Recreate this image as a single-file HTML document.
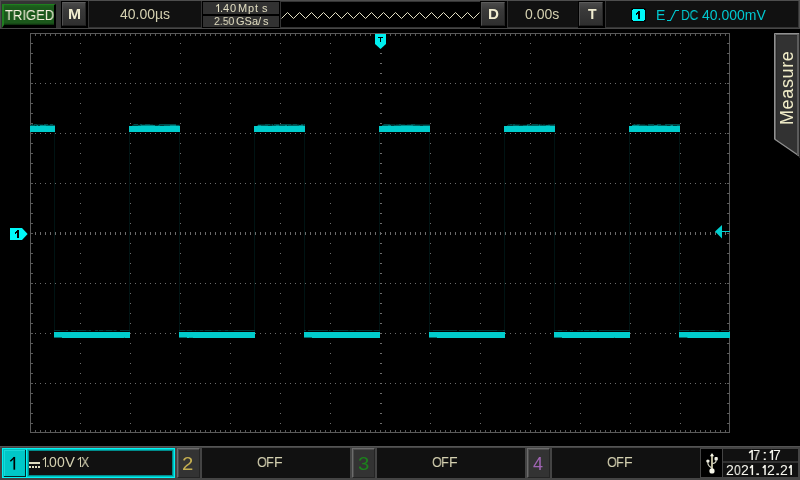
<!DOCTYPE html>
<html><head><meta charset="utf-8"><title>scope</title>
<style>
html,body{margin:0;padding:0;background:#000;}
body{width:800px;height:480px;position:relative;overflow:hidden;font-family:"Liberation Sans",sans-serif;}
.a{position:absolute;}
.t{will-change:transform;position:absolute;white-space:nowrap;line-height:1;transform-origin:0 0;}
.pn{position:absolute;background:#111;}
.btn{position:absolute;background:#000;}
.btn i{position:absolute;left:1px;top:1px;right:2px;bottom:2px;background:linear-gradient(#4a4a4a,#3a3a3a 30%,#2e2e2e);border-top:1px solid #5c5c5c;border-left:1px solid #505050;border-right:1px solid #262626;border-bottom:1px solid #1c1c1c;box-sizing:border-box;}
.cb{position:absolute;box-sizing:border-box;background:#333;border-top:1px solid #6c6c6c;border-left:1px solid #6c6c6c;border-right:1px solid #242424;border-bottom:1px solid #242424;box-shadow:inset 1px 1px 0 #4c4c4c;}
</style></head><body>

<div class="a" style="left:0;top:0;width:800px;height:29px;background:#343434"></div>
<div class="a" style="left:0;top:0;width:800px;height:1px;background:#4e4e4e"></div>
<div class="a" style="left:0;top:0;width:1px;height:29px;background:#4e4e4e"></div>
<div class="a" style="left:799px;top:0;width:1px;height:29px;background:#4e4e4e"></div>
<div class="a" style="left:0;top:28px;width:800px;height:1px;background:#484848"></div>
<div class="a" style="left:2px;top:4px;width:54px;height:24px;box-sizing:border-box;background:linear-gradient(#1d661d,#1b581b 3px,#1b581b 18px,#0c280c 20px);border-left:2px solid #1f7f1f;border-top:1px solid #1f7f1f;border-right:2px solid #000;border-bottom:3px solid #000"></div>
<div class="t" id="triged" style="left:4.6px;top:8px;font-size:14px;color:#f4f0dc;transform:scaleX(0.93)">TRIGED</div>
<div class="btn" style="left:61px;top:1px;width:27px;height:27px"><i></i></div>
<div class="t" id="M" style="left:67.8px;top:7px;font-size:14px;font-weight:bold;color:#f0ecd0;transform:scaleX(1.12)">M</div>
<div class="pn" style="left:89px;top:1px;width:112px;height:26px"></div>
<div class="t" id="tb" style="left:120px;top:7px;font-size:14px;color:#d4d0b0">40.00µs</div>
<div class="a" style="left:202px;top:1px;width:78px;height:27px;background:#000"></div>
<div class="a" style="left:203px;top:2px;width:76px;height:12px;background:#323232"></div>
<div class="a" style="left:203px;top:16px;width:76px;height:11px;background:#323232"></div>
<svg class="a" style="left:0;top:0" width="800" height="480"><path d="M218.50,4 V12 M218.60,4.35 L216.20,6.32" stroke="#e0dcc0" stroke-width="1.1" fill="none"/></svg><div class="t" style="left:220.24px;top:2.69px;font-size:11px;color:#e0dcc0;transform:scaleX(0.955);">.</div><div class="t" style="left:223.14px;top:2.69px;font-size:11px;color:#e0dcc0;transform:scaleX(1.010);">4</div><div class="t" style="left:229.97px;top:2.69px;font-size:11px;color:#e0dcc0;transform:scaleX(1.008);">0</div>
<div class="t" id="m1b" style="left:238px;top:3px;font-size:11px;color:#e0dcc0;letter-spacing:0.8px">Mpt</div>
<div class="t" id="m1c" style="left:262px;top:3px;font-size:11px;color:#e0dcc0">s</div>
<div class="t" id="m2a" style="left:213.5px;top:16px;font-size:11px;color:#e0dcc0;transform:scaleX(0.95)">2.50</div>
<div class="t" id="m2b" style="left:235.5px;top:16px;font-size:11px;color:#e0dcc0">GSa/</div>
<div class="t" id="m2c" style="left:263.3px;top:16px;font-size:11px;color:#e0dcc0">s</div>
<div class="a" style="left:281px;top:2px;width:199px;height:25px;background:#000"></div>
<svg class="a" style="left:0;top:0" width="800" height="29"><polyline points="281.5,18.5 287.5,12.5 293.5,18.5 299.5,12.5 305.5,18.5 311.5,12.5 317.5,18.5 323.5,12.5 329.5,18.5 335.5,12.5 341.5,18.5 347.5,12.5 353.5,18.5 359.5,12.5 365.5,18.5 371.5,12.5 377.5,18.5 383.5,12.5 389.5,18.5 395.5,12.5 401.5,18.5 407.5,12.5 413.5,18.5 419.5,12.5 425.5,18.5 431.5,12.5 437.5,18.5 443.5,12.5 449.5,18.5 455.5,12.5 461.5,18.5 467.5,12.5 473.5,18.5 479.5,12.5" fill="none" stroke="#e4e0c4" stroke-width="1"/></svg>
<div class="btn" style="left:480px;top:1px;width:27px;height:27px"><i></i></div>
<div class="t" id="D" style="left:487.9px;top:7px;font-size:14px;font-weight:bold;color:#f0ecd0;transform:scaleX(1.08)">D</div>
<div class="pn" style="left:508px;top:1px;width:70px;height:26px"></div>
<div class="t" id="dl" style="left:525px;top:7px;font-size:14px;color:#d4d0b0">0.00s</div>
<div class="btn" style="left:578px;top:1px;width:27px;height:27px"><i></i></div>
<div class="t" id="T" style="left:588px;top:7px;font-size:14px;font-weight:bold;color:#f0ecd0">T</div>
<div class="pn" style="left:606px;top:1px;width:192px;height:26px"></div>
<div class="a" style="left:631px;top:8px;width:15px;height:14px;background:#000;border-radius:2px"></div>
<svg class="a" style="left:631px;top:8px" width="15" height="14" shape-rendering="crispEdges"><path d="M2,1 H13 V2 H14 V12 H13 V13 H2 V12 H1 V2 H2 Z" fill="#00f8f8"/><path d="M7,3 H9 V11 H7 V6 H6 V7 H5 V5 H6 V4 H7 Z" fill="#000"/></svg>
<div class="t" id="E" style="left:656px;top:8px;font-size:14px;color:#00c8d0">E</div>
<svg class="a" style="left:660px;top:5px" width="30" height="20"><polyline points="7,15.5 10.5,15.5 15.5,5.5 19,5.5" fill="none" stroke="#00c8d0" stroke-width="1.2"/></svg>
<div class="t" id="DC" style="left:680.5px;top:8px;font-size:14px;color:#00c8d0;transform:scaleX(0.86)">DC</div>
<div class="t" id="mv" style="left:702px;top:8px;font-size:14px;color:#00c8d0">40.000mV</div>
<svg class="a" style="left:0;top:0" width="800" height="480" shape-rendering="crispEdges">
<rect x="54" y="132" width="1" height="200" fill="#001313"/>
<rect x="129" y="132" width="1" height="200" fill="#001313"/>
<rect x="179" y="132" width="1" height="200" fill="#001313"/>
<rect x="254" y="132" width="1" height="200" fill="#001313"/>
<rect x="304" y="132" width="1" height="200" fill="#001313"/>
<rect x="379" y="132" width="1" height="200" fill="#001313"/>
<rect x="429" y="132" width="1" height="200" fill="#001313"/>
<rect x="504" y="132" width="1" height="200" fill="#001313"/>
<rect x="554" y="132" width="1" height="200" fill="#001313"/>
<rect x="629" y="132" width="1" height="200" fill="#001313"/>
<rect x="679" y="132" width="1" height="200" fill="#001313"/>
<rect x="30.5" y="33.5" width="699" height="399" fill="none" stroke="#5a5a5a" stroke-width="1"/>
<line x1="35" y1="35" x2="726" y2="35" stroke="#5a5a5a" stroke-width="2" stroke-dasharray="1 4"/>
<line x1="35" y1="431" x2="726" y2="431" stroke="#5a5a5a" stroke-width="2" stroke-dasharray="1 4"/>
<line x1="32" y1="43" x2="32" y2="424" stroke="#5a5a5a" stroke-width="2" stroke-dasharray="1 9"/>
<line x1="728" y1="43" x2="728" y2="424" stroke="#5a5a5a" stroke-width="2" stroke-dasharray="1 9"/>
<line x1="35" y1="83.5" x2="726" y2="83.5" stroke="#6c6c6c" stroke-width="1" stroke-dasharray="1 4"/>
<line x1="35" y1="133.5" x2="726" y2="133.5" stroke="#6c6c6c" stroke-width="1" stroke-dasharray="1 4"/>
<line x1="35" y1="183.5" x2="726" y2="183.5" stroke="#6c6c6c" stroke-width="1" stroke-dasharray="1 4"/>
<line x1="35" y1="283.5" x2="726" y2="283.5" stroke="#6c6c6c" stroke-width="1" stroke-dasharray="1 4"/>
<line x1="35" y1="333.5" x2="726" y2="333.5" stroke="#6c6c6c" stroke-width="1" stroke-dasharray="1 4"/>
<line x1="35" y1="383.5" x2="726" y2="383.5" stroke="#6c6c6c" stroke-width="1" stroke-dasharray="1 4"/>
<line x1="80.5" y1="43" x2="80.5" y2="424" stroke="#6c6c6c" stroke-width="1" stroke-dasharray="1 9"/>
<line x1="130.5" y1="43" x2="130.5" y2="424" stroke="#6c6c6c" stroke-width="1" stroke-dasharray="1 9"/>
<line x1="180.5" y1="43" x2="180.5" y2="424" stroke="#6c6c6c" stroke-width="1" stroke-dasharray="1 9"/>
<line x1="230.5" y1="43" x2="230.5" y2="424" stroke="#6c6c6c" stroke-width="1" stroke-dasharray="1 9"/>
<line x1="280.5" y1="43" x2="280.5" y2="424" stroke="#6c6c6c" stroke-width="1" stroke-dasharray="1 9"/>
<line x1="330.5" y1="43" x2="330.5" y2="424" stroke="#6c6c6c" stroke-width="1" stroke-dasharray="1 9"/>
<line x1="430.5" y1="43" x2="430.5" y2="424" stroke="#6c6c6c" stroke-width="1" stroke-dasharray="1 9"/>
<line x1="480.5" y1="43" x2="480.5" y2="424" stroke="#6c6c6c" stroke-width="1" stroke-dasharray="1 9"/>
<line x1="530.5" y1="43" x2="530.5" y2="424" stroke="#6c6c6c" stroke-width="1" stroke-dasharray="1 9"/>
<line x1="580.5" y1="43" x2="580.5" y2="424" stroke="#6c6c6c" stroke-width="1" stroke-dasharray="1 9"/>
<line x1="630.5" y1="43" x2="630.5" y2="424" stroke="#6c6c6c" stroke-width="1" stroke-dasharray="1 9"/>
<line x1="680.5" y1="43" x2="680.5" y2="424" stroke="#6c6c6c" stroke-width="1" stroke-dasharray="1 9"/>
<line x1="35" y1="233.5" x2="726" y2="233.5" stroke="#6c6c6c" stroke-width="3" stroke-dasharray="1 4"/>
<line x1="381" y1="43" x2="381" y2="424" stroke="#6c6c6c" stroke-width="2" stroke-dasharray="1 9"/>
<rect x="30" y="126" width="25" height="6" fill="#00cccc"/>
<rect x="30" y="125" width="25" height="1" fill="#005c5c"/>
<rect x="35" y="125" width="1" height="1" fill="#003838"/><rect x="37" y="125" width="1" height="1" fill="#008484"/><rect x="38" y="125" width="2" height="1" fill="#003838"/><rect x="40" y="125" width="1" height="1" fill="#008484"/><rect x="41" y="125" width="2" height="1" fill="#008484"/><rect x="43" y="125" width="3" height="1" fill="#008484"/>
<rect x="31" y="124" width="24" height="1" fill="#002a2a"/>
<rect x="32" y="124" width="1" height="1" fill="#004c4c"/><rect x="33" y="124" width="1" height="1" fill="#001010"/><rect x="34" y="124" width="3" height="1" fill="#004c4c"/><rect x="43" y="124" width="1" height="1" fill="#001010"/><rect x="44" y="124" width="4" height="1" fill="#004c4c"/><rect x="48" y="124" width="1" height="1" fill="#001010"/><rect x="49" y="124" width="1" height="1" fill="#001010"/><rect x="50" y="124" width="3" height="1" fill="#004c4c"/><rect x="53" y="124" width="2" height="1" fill="#001010"/>
<rect x="129" y="126" width="51" height="6" fill="#00cccc"/>
<rect x="132" y="125" width="48" height="1" fill="#005c5c"/>
<rect x="132" y="125" width="6" height="1" fill="#003838"/><rect x="141" y="125" width="2" height="1" fill="#008484"/><rect x="143" y="125" width="6" height="1" fill="#008484"/><rect x="149" y="125" width="6" height="1" fill="#008484"/><rect x="155" y="125" width="3" height="1" fill="#003838"/><rect x="160" y="125" width="4" height="1" fill="#003838"/><rect x="170" y="125" width="2" height="1" fill="#008484"/><rect x="172" y="125" width="4" height="1" fill="#008484"/><rect x="179" y="125" width="1" height="1" fill="#003838"/>
<rect x="133" y="124" width="47" height="1" fill="#002a2a"/>
<rect x="134" y="124" width="4" height="1" fill="#004c4c"/><rect x="138" y="124" width="2" height="1" fill="#001010"/><rect x="140" y="124" width="2" height="1" fill="#004c4c"/><rect x="145" y="124" width="1" height="1" fill="#004c4c"/><rect x="146" y="124" width="4" height="1" fill="#004c4c"/><rect x="153" y="124" width="6" height="1" fill="#001010"/><rect x="159" y="124" width="4" height="1" fill="#004c4c"/><rect x="163" y="124" width="4" height="1" fill="#004c4c"/><rect x="167" y="124" width="2" height="1" fill="#004c4c"/><rect x="169" y="124" width="3" height="1" fill="#004c4c"/><rect x="172" y="124" width="1" height="1" fill="#004c4c"/><rect x="173" y="124" width="2" height="1" fill="#004c4c"/><rect x="175" y="124" width="1" height="1" fill="#004c4c"/><rect x="176" y="124" width="4" height="1" fill="#001010"/>
<rect x="254" y="126" width="51" height="6" fill="#00cccc"/>
<rect x="257" y="125" width="48" height="1" fill="#005c5c"/>
<rect x="257" y="125" width="1" height="1" fill="#003838"/><rect x="258" y="125" width="3" height="1" fill="#008484"/><rect x="268" y="125" width="4" height="1" fill="#003838"/><rect x="276" y="125" width="1" height="1" fill="#008484"/><rect x="277" y="125" width="1" height="1" fill="#008484"/><rect x="278" y="125" width="1" height="1" fill="#008484"/><rect x="285" y="125" width="2" height="1" fill="#008484"/><rect x="287" y="125" width="1" height="1" fill="#003838"/><rect x="299" y="125" width="4" height="1" fill="#008484"/>
<rect x="258" y="124" width="47" height="1" fill="#002a2a"/>
<rect x="265" y="124" width="3" height="1" fill="#004c4c"/><rect x="268" y="124" width="2" height="1" fill="#004c4c"/><rect x="272" y="124" width="1" height="1" fill="#004c4c"/><rect x="273" y="124" width="1" height="1" fill="#001010"/><rect x="274" y="124" width="1" height="1" fill="#004c4c"/><rect x="275" y="124" width="1" height="1" fill="#004c4c"/><rect x="276" y="124" width="3" height="1" fill="#004c4c"/><rect x="280" y="124" width="3" height="1" fill="#004c4c"/><rect x="283" y="124" width="6" height="1" fill="#004c4c"/><rect x="289" y="124" width="2" height="1" fill="#004c4c"/><rect x="293" y="124" width="3" height="1" fill="#004c4c"/><rect x="296" y="124" width="1" height="1" fill="#004c4c"/><rect x="299" y="124" width="2" height="1" fill="#001010"/><rect x="301" y="124" width="2" height="1" fill="#004c4c"/><rect x="304" y="124" width="1" height="1" fill="#004c4c"/>
<rect x="379" y="126" width="51" height="6" fill="#00cccc"/>
<rect x="382" y="125" width="48" height="1" fill="#005c5c"/>
<rect x="388" y="125" width="3" height="1" fill="#008484"/><rect x="391" y="125" width="3" height="1" fill="#003838"/><rect x="401" y="125" width="6" height="1" fill="#008484"/><rect x="407" y="125" width="6" height="1" fill="#008484"/><rect x="420" y="125" width="3" height="1" fill="#003838"/>
<rect x="383" y="124" width="47" height="1" fill="#002a2a"/>
<rect x="384" y="124" width="6" height="1" fill="#004c4c"/><rect x="395" y="124" width="1" height="1" fill="#001010"/><rect x="399" y="124" width="2" height="1" fill="#004c4c"/><rect x="405" y="124" width="2" height="1" fill="#001010"/><rect x="411" y="124" width="2" height="1" fill="#004c4c"/><rect x="413" y="124" width="1" height="1" fill="#004c4c"/><rect x="414" y="124" width="1" height="1" fill="#004c4c"/>
<rect x="504" y="126" width="51" height="6" fill="#00cccc"/>
<rect x="507" y="125" width="48" height="1" fill="#005c5c"/>
<rect x="507" y="125" width="1" height="1" fill="#003838"/><rect x="508" y="125" width="1" height="1" fill="#003838"/><rect x="509" y="125" width="4" height="1" fill="#003838"/><rect x="519" y="125" width="4" height="1" fill="#003838"/><rect x="527" y="125" width="1" height="1" fill="#008484"/><rect x="539" y="125" width="1" height="1" fill="#008484"/><rect x="546" y="125" width="4" height="1" fill="#008484"/>
<rect x="508" y="124" width="47" height="1" fill="#002a2a"/>
<rect x="510" y="124" width="1" height="1" fill="#004c4c"/><rect x="511" y="124" width="1" height="1" fill="#004c4c"/><rect x="513" y="124" width="2" height="1" fill="#004c4c"/><rect x="520" y="124" width="4" height="1" fill="#001010"/><rect x="524" y="124" width="3" height="1" fill="#001010"/><rect x="527" y="124" width="3" height="1" fill="#004c4c"/><rect x="530" y="124" width="1" height="1" fill="#001010"/><rect x="532" y="124" width="6" height="1" fill="#004c4c"/><rect x="539" y="124" width="1" height="1" fill="#004c4c"/><rect x="542" y="124" width="1" height="1" fill="#001010"/><rect x="545" y="124" width="3" height="1" fill="#001010"/><rect x="554" y="124" width="1" height="1" fill="#004c4c"/>
<rect x="629" y="126" width="51" height="6" fill="#00cccc"/>
<rect x="632" y="125" width="48" height="1" fill="#005c5c"/>
<rect x="632" y="125" width="1" height="1" fill="#008484"/><rect x="633" y="125" width="6" height="1" fill="#008484"/><rect x="647" y="125" width="1" height="1" fill="#003838"/><rect x="654" y="125" width="4" height="1" fill="#008484"/><rect x="667" y="125" width="1" height="1" fill="#003838"/><rect x="668" y="125" width="2" height="1" fill="#003838"/><rect x="671" y="125" width="2" height="1" fill="#008484"/><rect x="673" y="125" width="4" height="1" fill="#003838"/>
<rect x="633" y="124" width="47" height="1" fill="#002a2a"/>
<rect x="634" y="124" width="1" height="1" fill="#004c4c"/><rect x="637" y="124" width="1" height="1" fill="#004c4c"/><rect x="638" y="124" width="2" height="1" fill="#004c4c"/><rect x="645" y="124" width="3" height="1" fill="#001010"/><rect x="648" y="124" width="2" height="1" fill="#004c4c"/><rect x="650" y="124" width="2" height="1" fill="#004c4c"/><rect x="652" y="124" width="2" height="1" fill="#004c4c"/><rect x="654" y="124" width="3" height="1" fill="#001010"/><rect x="657" y="124" width="4" height="1" fill="#004c4c"/><rect x="661" y="124" width="2" height="1" fill="#001010"/><rect x="663" y="124" width="2" height="1" fill="#001010"/><rect x="665" y="124" width="1" height="1" fill="#004c4c"/><rect x="666" y="124" width="6" height="1" fill="#004c4c"/><rect x="672" y="124" width="1" height="1" fill="#004c4c"/><rect x="673" y="124" width="2" height="1" fill="#004c4c"/><rect x="675" y="124" width="5" height="1" fill="#004c4c"/>
<rect x="54" y="332" width="76" height="6" fill="#00cccc"/>
<rect x="54" y="330" width="6" height="1" fill="#003434"/><rect x="60" y="330" width="2" height="1" fill="#001c1c"/><rect x="62" y="330" width="4" height="1" fill="#001c1c"/><rect x="66" y="330" width="2" height="1" fill="#003434"/><rect x="71" y="330" width="3" height="1" fill="#003434"/><rect x="74" y="330" width="2" height="1" fill="#003434"/><rect x="76" y="330" width="1" height="1" fill="#001c1c"/><rect x="77" y="330" width="1" height="1" fill="#003434"/><rect x="78" y="330" width="1" height="1" fill="#003434"/><rect x="79" y="330" width="1" height="1" fill="#003434"/><rect x="80" y="330" width="6" height="1" fill="#003434"/><rect x="86" y="330" width="3" height="1" fill="#001c1c"/><rect x="89" y="330" width="1" height="1" fill="#003434"/><rect x="90" y="330" width="1" height="1" fill="#003434"/><rect x="95" y="330" width="2" height="1" fill="#003434"/><rect x="97" y="330" width="1" height="1" fill="#003434"/><rect x="99" y="330" width="1" height="1" fill="#003434"/><rect x="100" y="330" width="1" height="1" fill="#003434"/><rect x="101" y="330" width="2" height="1" fill="#003434"/><rect x="103" y="330" width="3" height="1" fill="#001c1c"/><rect x="106" y="330" width="2" height="1" fill="#003434"/><rect x="108" y="330" width="4" height="1" fill="#003434"/><rect x="112" y="330" width="2" height="1" fill="#001c1c"/><rect x="114" y="330" width="2" height="1" fill="#003434"/><rect x="116" y="330" width="1" height="1" fill="#001c1c"/><rect x="120" y="330" width="3" height="1" fill="#003434"/><rect x="123" y="330" width="2" height="1" fill="#003434"/><rect x="125" y="330" width="5" height="1" fill="#003434"/>
<rect x="54" y="337" width="8" height="1" fill="#007070"/>
<rect x="124" y="337" width="1" height="1" fill="#00a4a4"/>
<rect x="179" y="332" width="76" height="6" fill="#00cccc"/>
<rect x="179" y="330" width="6" height="1" fill="#003434"/><rect x="185" y="330" width="2" height="1" fill="#001c1c"/><rect x="187" y="330" width="1" height="1" fill="#003434"/><rect x="188" y="330" width="1" height="1" fill="#003434"/><rect x="189" y="330" width="2" height="1" fill="#003434"/><rect x="191" y="330" width="1" height="1" fill="#003434"/><rect x="192" y="330" width="3" height="1" fill="#001c1c"/><rect x="195" y="330" width="1" height="1" fill="#003434"/><rect x="196" y="330" width="4" height="1" fill="#001c1c"/><rect x="200" y="330" width="3" height="1" fill="#003434"/><rect x="203" y="330" width="2" height="1" fill="#001c1c"/><rect x="205" y="330" width="2" height="1" fill="#003434"/><rect x="207" y="330" width="4" height="1" fill="#003434"/><rect x="211" y="330" width="1" height="1" fill="#003434"/><rect x="212" y="330" width="6" height="1" fill="#001c1c"/><rect x="218" y="330" width="3" height="1" fill="#003434"/><rect x="221" y="330" width="4" height="1" fill="#001c1c"/><rect x="225" y="330" width="3" height="1" fill="#003434"/><rect x="228" y="330" width="3" height="1" fill="#001c1c"/><rect x="231" y="330" width="3" height="1" fill="#001c1c"/><rect x="234" y="330" width="6" height="1" fill="#003434"/><rect x="240" y="330" width="4" height="1" fill="#003434"/><rect x="244" y="330" width="4" height="1" fill="#003434"/><rect x="248" y="330" width="4" height="1" fill="#003434"/><rect x="252" y="330" width="1" height="1" fill="#003434"/><rect x="253" y="330" width="1" height="1" fill="#003434"/><rect x="254" y="330" width="1" height="1" fill="#003434"/>
<rect x="179" y="337" width="8" height="1" fill="#007070"/>
<rect x="189" y="337" width="4" height="1" fill="#00a4a4"/>
<rect x="304" y="332" width="76" height="6" fill="#00cccc"/>
<rect x="304" y="330" width="2" height="1" fill="#003434"/><rect x="308" y="330" width="1" height="1" fill="#003434"/><rect x="309" y="330" width="4" height="1" fill="#003434"/><rect x="313" y="330" width="4" height="1" fill="#003434"/><rect x="317" y="330" width="2" height="1" fill="#003434"/><rect x="319" y="330" width="6" height="1" fill="#003434"/><rect x="325" y="330" width="3" height="1" fill="#003434"/><rect x="329" y="330" width="1" height="1" fill="#003434"/><rect x="330" y="330" width="1" height="1" fill="#001c1c"/><rect x="333" y="330" width="2" height="1" fill="#003434"/><rect x="335" y="330" width="1" height="1" fill="#003434"/><rect x="336" y="330" width="1" height="1" fill="#003434"/><rect x="337" y="330" width="3" height="1" fill="#003434"/><rect x="340" y="330" width="2" height="1" fill="#003434"/><rect x="342" y="330" width="6" height="1" fill="#003434"/><rect x="348" y="330" width="2" height="1" fill="#001c1c"/><rect x="350" y="330" width="4" height="1" fill="#003434"/><rect x="354" y="330" width="2" height="1" fill="#001c1c"/><rect x="356" y="330" width="2" height="1" fill="#003434"/><rect x="358" y="330" width="1" height="1" fill="#003434"/><rect x="359" y="330" width="2" height="1" fill="#003434"/><rect x="361" y="330" width="2" height="1" fill="#003434"/><rect x="363" y="330" width="1" height="1" fill="#003434"/><rect x="364" y="330" width="2" height="1" fill="#003434"/><rect x="366" y="330" width="6" height="1" fill="#003434"/><rect x="372" y="330" width="2" height="1" fill="#001c1c"/><rect x="374" y="330" width="6" height="1" fill="#003434"/>
<rect x="304" y="337" width="8" height="1" fill="#007070"/>

<rect x="429" y="332" width="76" height="6" fill="#00cccc"/>
<rect x="429" y="330" width="4" height="1" fill="#001c1c"/><rect x="433" y="330" width="4" height="1" fill="#003434"/><rect x="437" y="330" width="4" height="1" fill="#003434"/><rect x="441" y="330" width="2" height="1" fill="#003434"/><rect x="443" y="330" width="2" height="1" fill="#003434"/><rect x="445" y="330" width="4" height="1" fill="#003434"/><rect x="449" y="330" width="1" height="1" fill="#003434"/><rect x="450" y="330" width="6" height="1" fill="#003434"/><rect x="456" y="330" width="1" height="1" fill="#003434"/><rect x="459" y="330" width="2" height="1" fill="#003434"/><rect x="461" y="330" width="3" height="1" fill="#003434"/><rect x="464" y="330" width="1" height="1" fill="#003434"/><rect x="465" y="330" width="3" height="1" fill="#003434"/><rect x="468" y="330" width="1" height="1" fill="#003434"/><rect x="469" y="330" width="6" height="1" fill="#003434"/><rect x="475" y="330" width="1" height="1" fill="#001c1c"/><rect x="476" y="330" width="2" height="1" fill="#003434"/><rect x="478" y="330" width="4" height="1" fill="#003434"/><rect x="482" y="330" width="2" height="1" fill="#003434"/><rect x="484" y="330" width="6" height="1" fill="#003434"/><rect x="490" y="330" width="2" height="1" fill="#003434"/><rect x="492" y="330" width="2" height="1" fill="#003434"/><rect x="494" y="330" width="3" height="1" fill="#003434"/><rect x="497" y="330" width="6" height="1" fill="#001c1c"/><rect x="503" y="330" width="1" height="1" fill="#003434"/><rect x="504" y="330" width="1" height="1" fill="#003434"/>
<rect x="429" y="337" width="8" height="1" fill="#007070"/>

<rect x="554" y="332" width="76" height="6" fill="#00cccc"/>
<rect x="554" y="330" width="4" height="1" fill="#001c1c"/><rect x="558" y="330" width="1" height="1" fill="#003434"/><rect x="559" y="330" width="3" height="1" fill="#003434"/><rect x="562" y="330" width="4" height="1" fill="#001c1c"/><rect x="566" y="330" width="1" height="1" fill="#003434"/><rect x="570" y="330" width="1" height="1" fill="#003434"/><rect x="571" y="330" width="1" height="1" fill="#001c1c"/><rect x="572" y="330" width="1" height="1" fill="#003434"/><rect x="577" y="330" width="4" height="1" fill="#001c1c"/><rect x="581" y="330" width="1" height="1" fill="#003434"/><rect x="582" y="330" width="1" height="1" fill="#003434"/><rect x="584" y="330" width="4" height="1" fill="#003434"/><rect x="588" y="330" width="1" height="1" fill="#003434"/><rect x="589" y="330" width="2" height="1" fill="#001c1c"/><rect x="591" y="330" width="4" height="1" fill="#003434"/><rect x="595" y="330" width="2" height="1" fill="#003434"/><rect x="599" y="330" width="1" height="1" fill="#003434"/><rect x="600" y="330" width="4" height="1" fill="#003434"/><rect x="604" y="330" width="2" height="1" fill="#003434"/><rect x="606" y="330" width="2" height="1" fill="#003434"/><rect x="608" y="330" width="6" height="1" fill="#003434"/><rect x="614" y="330" width="6" height="1" fill="#003434"/><rect x="620" y="330" width="1" height="1" fill="#003434"/><rect x="621" y="330" width="1" height="1" fill="#003434"/><rect x="622" y="330" width="6" height="1" fill="#003434"/><rect x="628" y="330" width="2" height="1" fill="#003434"/>
<rect x="554" y="337" width="8" height="1" fill="#007070"/>
<rect x="614" y="337" width="1" height="1" fill="#00a4a4"/>
<rect x="679" y="332" width="51" height="6" fill="#00cccc"/>
<rect x="679" y="330" width="2" height="1" fill="#003434"/><rect x="681" y="330" width="4" height="1" fill="#003434"/><rect x="685" y="330" width="2" height="1" fill="#003434"/><rect x="687" y="330" width="2" height="1" fill="#003434"/><rect x="689" y="330" width="2" height="1" fill="#001c1c"/><rect x="691" y="330" width="2" height="1" fill="#003434"/><rect x="693" y="330" width="2" height="1" fill="#003434"/><rect x="695" y="330" width="4" height="1" fill="#001c1c"/><rect x="699" y="330" width="1" height="1" fill="#003434"/><rect x="700" y="330" width="2" height="1" fill="#003434"/><rect x="702" y="330" width="1" height="1" fill="#003434"/><rect x="703" y="330" width="4" height="1" fill="#003434"/><rect x="707" y="330" width="3" height="1" fill="#003434"/><rect x="710" y="330" width="2" height="1" fill="#003434"/><rect x="712" y="330" width="3" height="1" fill="#003434"/><rect x="715" y="330" width="4" height="1" fill="#001c1c"/><rect x="721" y="330" width="2" height="1" fill="#003434"/><rect x="723" y="330" width="6" height="1" fill="#003434"/><rect x="729" y="330" width="1" height="1" fill="#003434"/>
<rect x="679" y="337" width="8" height="1" fill="#007070"/>
<rect x="687" y="337" width="1" height="1" fill="#00a4a4"/>
</svg>
<svg class="a" style="left:0;top:0" width="800" height="480">
<path d="M375,34 H386 V44 L380.5,49 L375,44 Z" fill="#00f0f0"/>
<path d="M378,37.5 H383 M380.5,37 V42" stroke="#000" stroke-width="1" fill="none" shape-rendering="crispEdges"/>
<path d="M10,228 H22 L27.6,234 L22,240 H10 Z" fill="#00f8f8"/>
<path d="M715,231.5 L722,225 V238.5 Z" fill="#00d0d0"/>
<rect x="722" y="231" width="8" height="1" fill="#00d0d0" shape-rendering="crispEdges"/>
</svg>
<svg class="a" style="left:0;top:0" width="40" height="480" shape-rendering="crispEdges"><path d="M17,230 H19 V238 H17 V233 H16 V234 H15 V232 H16 V231 H17 Z" fill="#000"/></svg>
<svg class="a" style="left:770px;top:30px" width="30" height="130">
<path d="M4,3 H30 V126.5 L4,109 Z" fill="#323232"/>
<path d="M6.5,110 V5.5 H30" fill="none" stroke="#2a2a2a" stroke-width="1"/>
<path d="M5.5,110 V4.5 H30" fill="none" stroke="#666" stroke-width="1"/>
<path d="M4.5,109 V3.5 H30" fill="none" stroke="#909090" stroke-width="1"/>
<path d="M4.5,109 L30,126.5" fill="none" stroke="#909090" stroke-width="1.3"/>
<rect x="27" y="5" width="2" height="120.5" fill="#5c5c5c"/>
<rect x="29" y="3" width="1" height="125" fill="#262626"/>
</svg>
<div class="t" id="meas" style="left:777.5px;top:124.5px;font-size:18px;color:#f0ecc8;letter-spacing:0.63px;transform:rotate(-90deg)">Measure</div>
<div class="a" style="left:0;top:446px;width:800px;height:34px;background:#444"></div>
<div class="a" style="left:0;top:446px;width:800px;height:1px;background:#545454"></div>
<div class="a" style="left:2px;top:448px;width:173px;height:30px;background:#00f4f4"></div>
<div class="a" style="left:3px;top:449px;width:171px;height:28px;background:#00c0c0"></div>
<div class="a" style="left:28px;top:450px;width:145px;height:26px;background:#008c8c"></div>
<div class="a" style="left:4px;top:450px;width:22px;height:27px;background:#002828"></div>
<div class="a" style="left:4px;top:450px;width:21px;height:26px;background:#00c8c8;box-sizing:border-box;border-top:1px solid #18d8d8;border-left:1px solid #18d8d8"></div>
<div class="a" style="left:26px;top:448px;width:1px;height:30px;background:#00f4f4"></div>
<div class="a" style="left:27px;top:449px;width:1px;height:28px;background:#00c0c0"></div>
<div class="a" style="left:29px;top:451px;width:143px;height:24px;background:#111"></div>
<svg class="a" style="left:0;top:446px" width="30" height="34"><path d="M14.3,11 V23.7" stroke="#000" stroke-width="1.7" fill="none"/><path d="M14.6,11.3 L10.3,15.3" stroke="#000" stroke-width="1.5" fill="none"/></svg>
<div class="a" style="left:29px;top:462px;width:11px;height:2px;background:#e0dcc0"></div>
<div class="a" style="left:29px;top:466px;width:2px;height:2px;background:#e0dcc0"></div>
<div class="a" style="left:32px;top:466px;width:2px;height:2px;background:#e0dcc0"></div>
<div class="a" style="left:35px;top:466px;width:2px;height:2px;background:#e0dcc0"></div>
<div class="a" style="left:38px;top:466px;width:2px;height:2px;background:#e0dcc0"></div>
<svg class="a" style="left:0;top:0" width="800" height="480"><path d="M45.50,457 V467 M45.60,457.35 L42.80,459.90" stroke="#d4d0b0" stroke-width="1.05" fill="none"/></svg><div class="t" style="left:45.85px;top:455.15px;font-size:14px;color:#d4d0b0;transform:scaleX(0.900);">.</div><div class="t" style="left:48.95px;top:455.15px;font-size:14px;color:#d4d0b0;transform:scaleX(1.001);">0</div><div class="t" style="left:57.06px;top:455.15px;font-size:14px;color:#d4d0b0;transform:scaleX(0.986);">0</div><div class="t" style="left:65.23px;top:455.15px;font-size:14px;color:#d4d0b0;transform:scaleX(1.064);">V</div><svg class="a" style="left:0;top:0" width="800" height="480"><path d="M80.50,457 V467 M80.60,457.35 L77.80,459.90" stroke="#d4d0b0" stroke-width="1.05" fill="none"/></svg><div class="t" style="left:80.72px;top:455.15px;font-size:14px;color:#d4d0b0;transform:scaleX(0.882);">X</div>
<div class="cb" style="left:177px;top:448px;width:23px;height:30px"></div>
<div class="t" id="b2" style="left:182.4px;top:455px;font-size:18px;color:#c4ae50;transform:scaleX(1.13)">2</div>
<div class="pn" style="left:202px;top:448px;width:148px;height:30px"></div>
<div class="t" style="left:256.89px;top:455.15px;font-size:14px;color:#d4d0b0;transform:scaleX(0.921);">O</div><div class="t" style="left:266.44px;top:455.15px;font-size:14px;color:#d4d0b0;transform:scaleX(0.921);">F</div><div class="t" style="left:274.14px;top:455.15px;font-size:14px;color:#d4d0b0;transform:scaleX(1.008);">F</div>
<div class="cb" style="left:352px;top:448px;width:23px;height:30px"></div>
<div class="t" id="b3" style="left:357.6px;top:455px;font-size:18px;color:#1c821c;transform:scaleX(1.13)">3</div>
<div class="pn" style="left:377px;top:448px;width:148px;height:30px"></div>
<div class="t" style="left:431.89px;top:455.15px;font-size:14px;color:#d4d0b0;transform:scaleX(0.921);">O</div><div class="t" style="left:441.44px;top:455.15px;font-size:14px;color:#d4d0b0;transform:scaleX(0.921);">F</div><div class="t" style="left:449.14px;top:455.15px;font-size:14px;color:#d4d0b0;transform:scaleX(1.008);">F</div>
<div class="cb" style="left:527px;top:448px;width:23px;height:30px"></div>
<div class="t" id="b4" style="left:533px;top:455px;font-size:18px;color:#a064b4;transform:scaleX(1.0)">4</div>
<div class="pn" style="left:552px;top:448px;width:148px;height:30px"></div>
<div class="t" style="left:606.89px;top:455.15px;font-size:14px;color:#d4d0b0;transform:scaleX(0.921);">O</div><div class="t" style="left:616.44px;top:455.15px;font-size:14px;color:#d4d0b0;transform:scaleX(0.921);">F</div><div class="t" style="left:624.14px;top:455.15px;font-size:14px;color:#d4d0b0;transform:scaleX(1.008);">F</div>
<div class="a" style="left:701px;top:449px;width:21px;height:28px;background:#000"></div>
<svg class="a" style="left:701px;top:449px" width="21" height="28">
<path d="M11,5.5 V21" stroke="#dcd8b4" stroke-width="1.7" fill="none"/>
<path d="M11,4 L13.1,7.2 H8.9 Z" fill="#f4f4e4"/>
<circle cx="11" cy="21.9" r="2.6" fill="#f6f6ea"/>
<circle cx="6.9" cy="12.1" r="1.7" fill="#f0f0e4"/>
<path d="M6.9,13 V14.6 Q6.9,17 10.8,18.9" stroke="#d0d0c0" stroke-width="1.1" fill="none"/>
<rect x="13.5" y="8.1" width="3.3" height="3.3" rx="1" fill="#f0f0e4"/>
<path d="M15.1,11 V12 Q15.1,13.9 11.3,14.8" stroke="#d0d0c0" stroke-width="1.1" fill="none"/>
</svg>
<div class="a" style="left:723px;top:461px;width:75px;height:2px;background:#323232"></div>
<div class="pn" style="left:723px;top:449px;width:75px;height:12px"></div>
<div class="pn" style="left:723px;top:463px;width:75px;height:14px"></div>
<svg class="a" style="left:0;top:0" width="800" height="480"><path d="M752.15,450 V460 M752.25,450.35 L749.10,452.90" stroke="#f8f8f0" stroke-width="1.5" fill="none"/></svg><div class="t" style="left:753.03px;top:448.15px;font-size:14px;color:#f8f8f0;transform:scaleX(0.927);">7</div><div class="t" style="left:762.48px;top:448.15px;font-size:14px;color:#f8f8f0;transform:scaleX(1.425);">:</div><svg class="a" style="left:0;top:0" width="800" height="480"><path d="M772.35,450 V460 M772.45,450.35 L769.90,452.90" stroke="#f8f8f0" stroke-width="1.5" fill="none"/></svg><div class="t" style="left:772.99px;top:448.15px;font-size:14px;color:#f8f8f0;transform:scaleX(0.990);">7</div>
<div class="t" style="left:726.20px;top:463.15px;font-size:14px;color:#f8f8f0;transform:scaleX(0.988);">2</div><div class="t" style="left:734.22px;top:463.15px;font-size:14px;color:#f8f8f0;transform:scaleX(0.882);">0</div><div class="t" style="left:741.30px;top:463.15px;font-size:14px;color:#f8f8f0;transform:scaleX(0.988);">2</div><svg class="a" style="left:0;top:0" width="800" height="480"><path d="M752.35,465 V475 M752.45,465.35 L750.10,467.90" stroke="#f8f8f0" stroke-width="1.5" fill="none"/></svg><div class="t" style="left:753.70px;top:463.15px;font-size:14px;color:#f8f8f0;transform:scaleX(1.875);">.</div><svg class="a" style="left:0;top:0" width="800" height="480"><path d="M765.05,465 V475 M765.15,465.35 L762.80,467.90" stroke="#f8f8f0" stroke-width="1.5" fill="none"/></svg><div class="t" style="left:766.59px;top:463.15px;font-size:14px;color:#f8f8f0;transform:scaleX(1.003);">2</div><div class="t" style="left:773.70px;top:463.15px;font-size:14px;color:#f8f8f0;transform:scaleX(1.875);">.</div><div class="t" style="left:780.30px;top:463.15px;font-size:14px;color:#f8f8f0;transform:scaleX(0.988);">2</div><svg class="a" style="left:0;top:0" width="800" height="480"><path d="M791.15,465 V475 M791.25,465.35 L789.10,467.90" stroke="#f8f8f0" stroke-width="1.5" fill="none"/></svg>
</body></html>
